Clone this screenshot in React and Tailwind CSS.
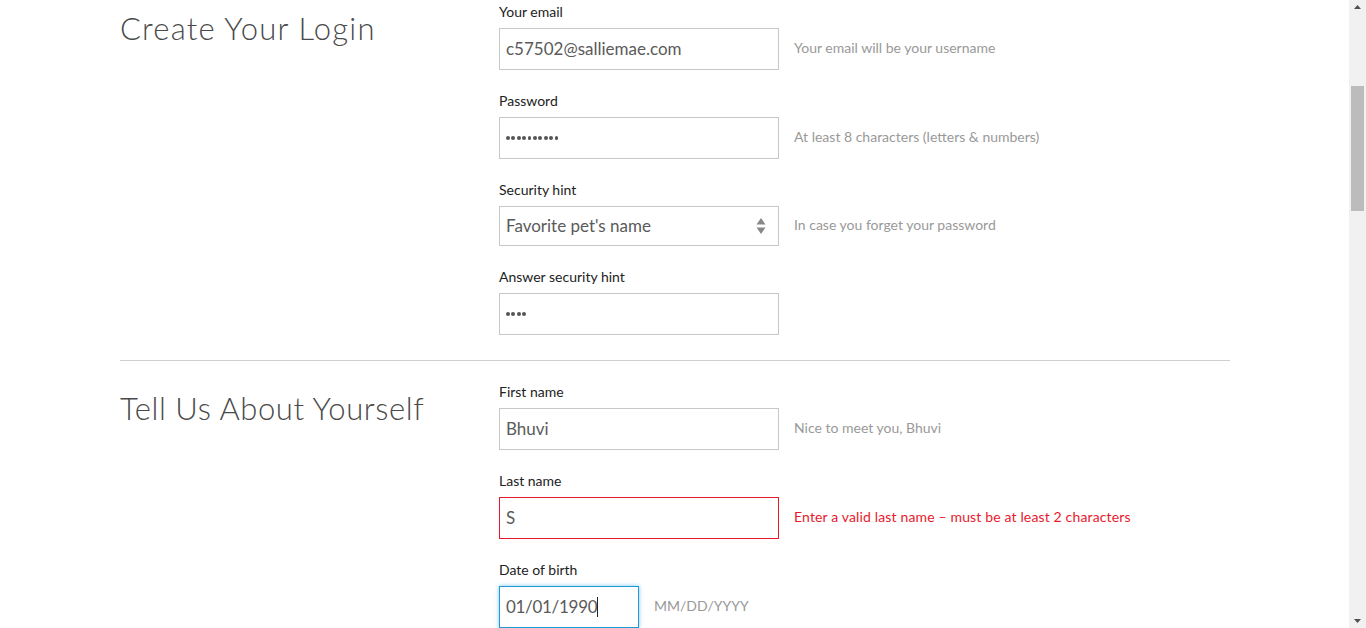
import React from "react";

const Field = ({ label, children, hint, hintClass = "text-[#999]", last }) => (
  <div className={last ? "" : "mb-[21px]"}>
    <div className="text-[14px] leading-[20px] text-[#222] mb-[6px]">{label}</div>
    <div className="flex items-center">
      {children}
      {hint && <div className={`ml-[15px] text-[14px] leading-[18px] -mt-[2px] ${hintClass}`}>{hint}</div>}
    </div>
  </div>
);

const Box = ({ children, className = "border-[#c8c8c8] w-[280px] h-[42px]" }) => (
  <div className={`border bg-white flex items-center px-[6px] text-[17px] text-[#5a5a5a] ${className}`}>
    {children}
  </div>
);

const Dots = ({ n }) => (
  <span className="flex gap-[1.6px]">
    {Array.from({ length: n }).map((_, i) => (
      <span key={i} className="w-[3.8px] h-[3.8px] rounded-full bg-[#555]" />
    ))}
  </span>
);

export default function App() {
  return (
    <div
      className="h-[628px] w-[1366px] overflow-hidden flex bg-white"
      style={{ fontFamily: "Lato, 'Liberation Sans', sans-serif" }}
    >
      <div className="flex-1 pl-[120px] pr-[119px]">
        {/* Create Your Login */}
        <div className="flex pt-[2px]">
          <div className="w-[379px]">
            <h1 className="text-[31px] font-light text-[#4a4a4a] tracking-[1.2px] leading-[40px] mt-[6px]">
              Create Your Login
            </h1>
          </div>
          <div>
            <Field label="Your email" hint="Your email will be your username">
              <Box>c57502@salliemae.com</Box>
            </Field>
            <Field label="Password" hint="At least 8 characters (letters & numbers)">
              <Box><Dots n={10} /></Box>
            </Field>
            <Field label="Security hint" hint="In case you forget your password">
              <Box className="border-[#c8c8c8] w-[280px] h-[40px] justify-between pr-[12px]">
                <span>Favorite pet's name</span>
                <svg width="10" height="18" viewBox="0 0 10 18">
                  <path d="M5 1 L9.5 7.5 L0.5 7.5 Z" fill="#888" />
                  <path d="M5 17 L9.5 10.5 L0.5 10.5 Z" fill="#888" />
                </svg>
              </Box>
            </Field>
            <Field label="Answer security hint" last>
              <Box><Dots n={4} /></Box>
            </Field>
          </div>
        </div>

        <div className="border-t border-[#d0d0d0] mt-[25px] mb-[21px]" />

        {/* Tell Us About Yourself */}
        <div className="flex">
          <div className="w-[379px]">
            <h2 className="text-[31px] font-light text-[#4a4a4a] tracking-[0.6px] leading-[40px] mt-[6px]">
              Tell Us About Yourself
            </h2>
          </div>
          <div>
            <Field label="First name" hint="Nice to meet you, Bhuvi">
              <Box>Bhuvi</Box>
            </Field>
            <Field
              label="Last name"
              hint="Enter a valid last name – must be at least 2 characters"
              hintClass="text-[#e8192c] tracking-[0.15px]"
            >
              <Box className="border-[#e8192c] w-[280px] h-[42px]">S</Box>
            </Field>
            <Field label="Date of birth" hint="MM/DD/YYYY" last>
              <Box className="border-[#1e9ad6] w-[140px] h-[42px] shadow-[0_0_4px_rgba(30,154,214,0.6)]">
                <span className="tracking-[-0.3px]">01/01/1990</span>
                <span className="w-px h-[20px] bg-[#222]" />
              </Box>
            </Field>
          </div>
        </div>
      </div>

      {/* scrollbar */}
      <div className="w-[17px] h-full bg-[#f1f1f1] flex flex-col items-center">
        <svg width="9" height="17" viewBox="0 0 9 17" className="shrink-0">
          <path d="M4.5 5 L8 9 L1 9 Z" fill="#505050" />
        </svg>
        <div className="w-[13px] h-[125px] bg-[#bcbcbc] mt-[69px]" />
        <div className="flex-1" />
        <svg width="9" height="17" viewBox="0 0 9 17" className="shrink-0">
          <path d="M4.5 12 L8 8 L1 8 Z" fill="#505050" />
        </svg>
      </div>
    </div>
  );
}
